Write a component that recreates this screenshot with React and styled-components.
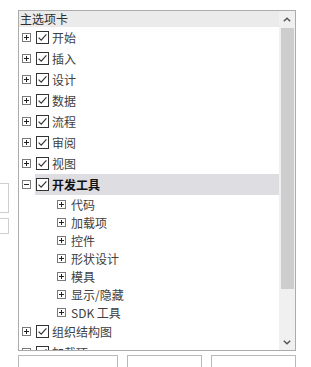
import React from "react";
import styled, { createGlobalStyle } from "styled-components";

const GlobalStyle = createGlobalStyle`
  html, body {
    margin: 0;
    padding: 0;
    background: #fff;
  }
  body {
    font-family: "Noto Sans CJK SC", "Noto Sans", sans-serif;
    font-size: 12px;
    color: #404040;
  }
`;

const Page = styled.div`
  width: 311px;
  height: 367px;
  overflow: hidden;
  padding-top: 10px;
  box-sizing: border-box;
`;

const TopRow = styled.div`
  display: flex;
  align-items: flex-start;
`;

const Stubs = styled.div`
  width: 9px;
  margin-top: 173px;
  display: flex;
  flex-direction: column;
  gap: 5px;
`;

const Stub = styled.div`
  height: ${(p) => p.h}px;
  border: 1px solid #cfcfcf;
  border-left: none;
  box-sizing: border-box;
`;

const Panel = styled.div`
  margin-left: 9px;
  width: 278px;
  height: 341px;
  border: 1px solid #acacac;
  box-sizing: border-box;
  display: flex;
  overflow: hidden;
`;

const List = styled.div`
  flex: 1;
  min-width: 0;
  display: flex;
  flex-direction: column;
`;

const Header = styled.div`
  height: 16px;
  flex-shrink: 0;
  background: #ebebeb;
  color: #2e2e2e;
  line-height: 16px;
  padding-left: 1px;
`;

const Row = styled.div`
  height: ${(p) => p.h}px;
  flex-shrink: 0;
  display: flex;
  align-items: center;
  padding-left: ${(p) => 3 + p.depth * 35}px;
`;

const Label = styled.div`
  flex: 1;
  align-self: stretch;
  display: flex;
  align-items: center;
  gap: 3px;
  margin-left: 4px;
  padding-left: 1px;
  background: ${(p) => (p.selected ? "#dddde2" : "transparent")};
  color: ${(p) => (p.selected ? "#111" : "#404040")};
  font-weight: ${(p) => (p.selected ? 700 : 400)};
  white-space: nowrap;
`;

const Scrollbar = styled.div`
  width: 16px;
  flex-shrink: 0;
  background: #f0f0f0;
  display: flex;
  flex-direction: column;
`;

const ArrowButton = styled.div`
  height: 16px;
  flex-shrink: 0;
  display: flex;
  align-items: center;
  justify-content: center;
`;

const Thumb = styled.div`
  height: 261px;
  margin: 1px 1px 0 2px;
  background: #cdcdcd;
`;

const Track = styled.div`
  flex: 1;
`;

const BottomRow = styled.div`
  display: flex;
  gap: 9px;
  margin: 4px 0 0 18px;
`;

const Field = styled.div`
  width: ${(p) => p.w}px;
  height: 24px;
  border: 1px solid #b9b9b9;
  box-sizing: border-box;
`;

const Expander = ({ open }) => (
  <svg width="9" height="9" viewBox="0 0 9 9" style={{ flexShrink: 0 }}>
    <rect x="0.5" y="0.5" width="8" height="8" fill="#fff" stroke="#7a7a7a" />
    <line x1="2" y1="4.5" x2="7" y2="4.5" stroke="#222" />
    {!open && <line x1="4.5" y1="2" x2="4.5" y2="7" stroke="#222" />}
  </svg>
);

const Check = () => (
  <svg width="13" height="13" viewBox="0 0 13 13" style={{ flexShrink: 0 }}>
    <rect x="0.5" y="0.5" width="12" height="12" fill="#fff" stroke="#333" />
    <path d="M2.6 6.6 L5.2 9.1 L10.4 3.4" fill="none" stroke="#333" strokeWidth="1.2" />
  </svg>
);

const Chevron = ({ up }) => (
  <svg width="8" height="5" viewBox="0 0 8 5">
    <path
      d={up ? "M0.8 4.2 L4 1.2 L7.2 4.2" : "M0.8 0.8 L4 3.8 L7.2 0.8"}
      fill="none"
      stroke="#555"
      strokeWidth="1.5"
    />
  </svg>
);

const tree = [
  { label: "开始" },
  { label: "插入" },
  { label: "设计" },
  { label: "数据" },
  { label: "流程" },
  { label: "审阅" },
  { label: "视图" },
  {
    label: "开发工具",
    open: true,
    selected: true,
    children: ["代码", "加载项", "控件", "形状设计", "模具", "显示/隐藏", "SDK 工具"],
  },
  { label: "组织结构图" },
  { label: "加载项" },
];

const App = () => {
  return (
    <>
      <GlobalStyle />
      <Page>
        <TopRow>
          <Stubs>
            <Stub h={30} />
            <Stub h={16} />
          </Stubs>
          <Panel>
            <List>
              <Header>主选项卡</Header>
              {tree.map((item) => (
                <React.Fragment key={item.label}>
                  <Row h={21} depth={0}>
                    <Expander open={item.open} />
                    <Label selected={item.selected}>
                      <Check />
                      {item.label}
                    </Label>
                  </Row>
                  {item.open &&
                    item.children.map((child) => (
                      <Row key={child} h={18} depth={1}>
                        <Expander />
                        <Label>{child}</Label>
                      </Row>
                    ))}
                </React.Fragment>
              ))}
            </List>
            <Scrollbar>
              <ArrowButton>
                <Chevron up />
              </ArrowButton>
              <Thumb />
              <Track />
              <ArrowButton>
                <Chevron />
              </ArrowButton>
            </Scrollbar>
          </Panel>
        </TopRow>
        <BottomRow>
          <Field w={100} />
          <Field w={75} />
          <Field w={85} />
        </BottomRow>
      </Page>
    </>
  );
};

export default App;
